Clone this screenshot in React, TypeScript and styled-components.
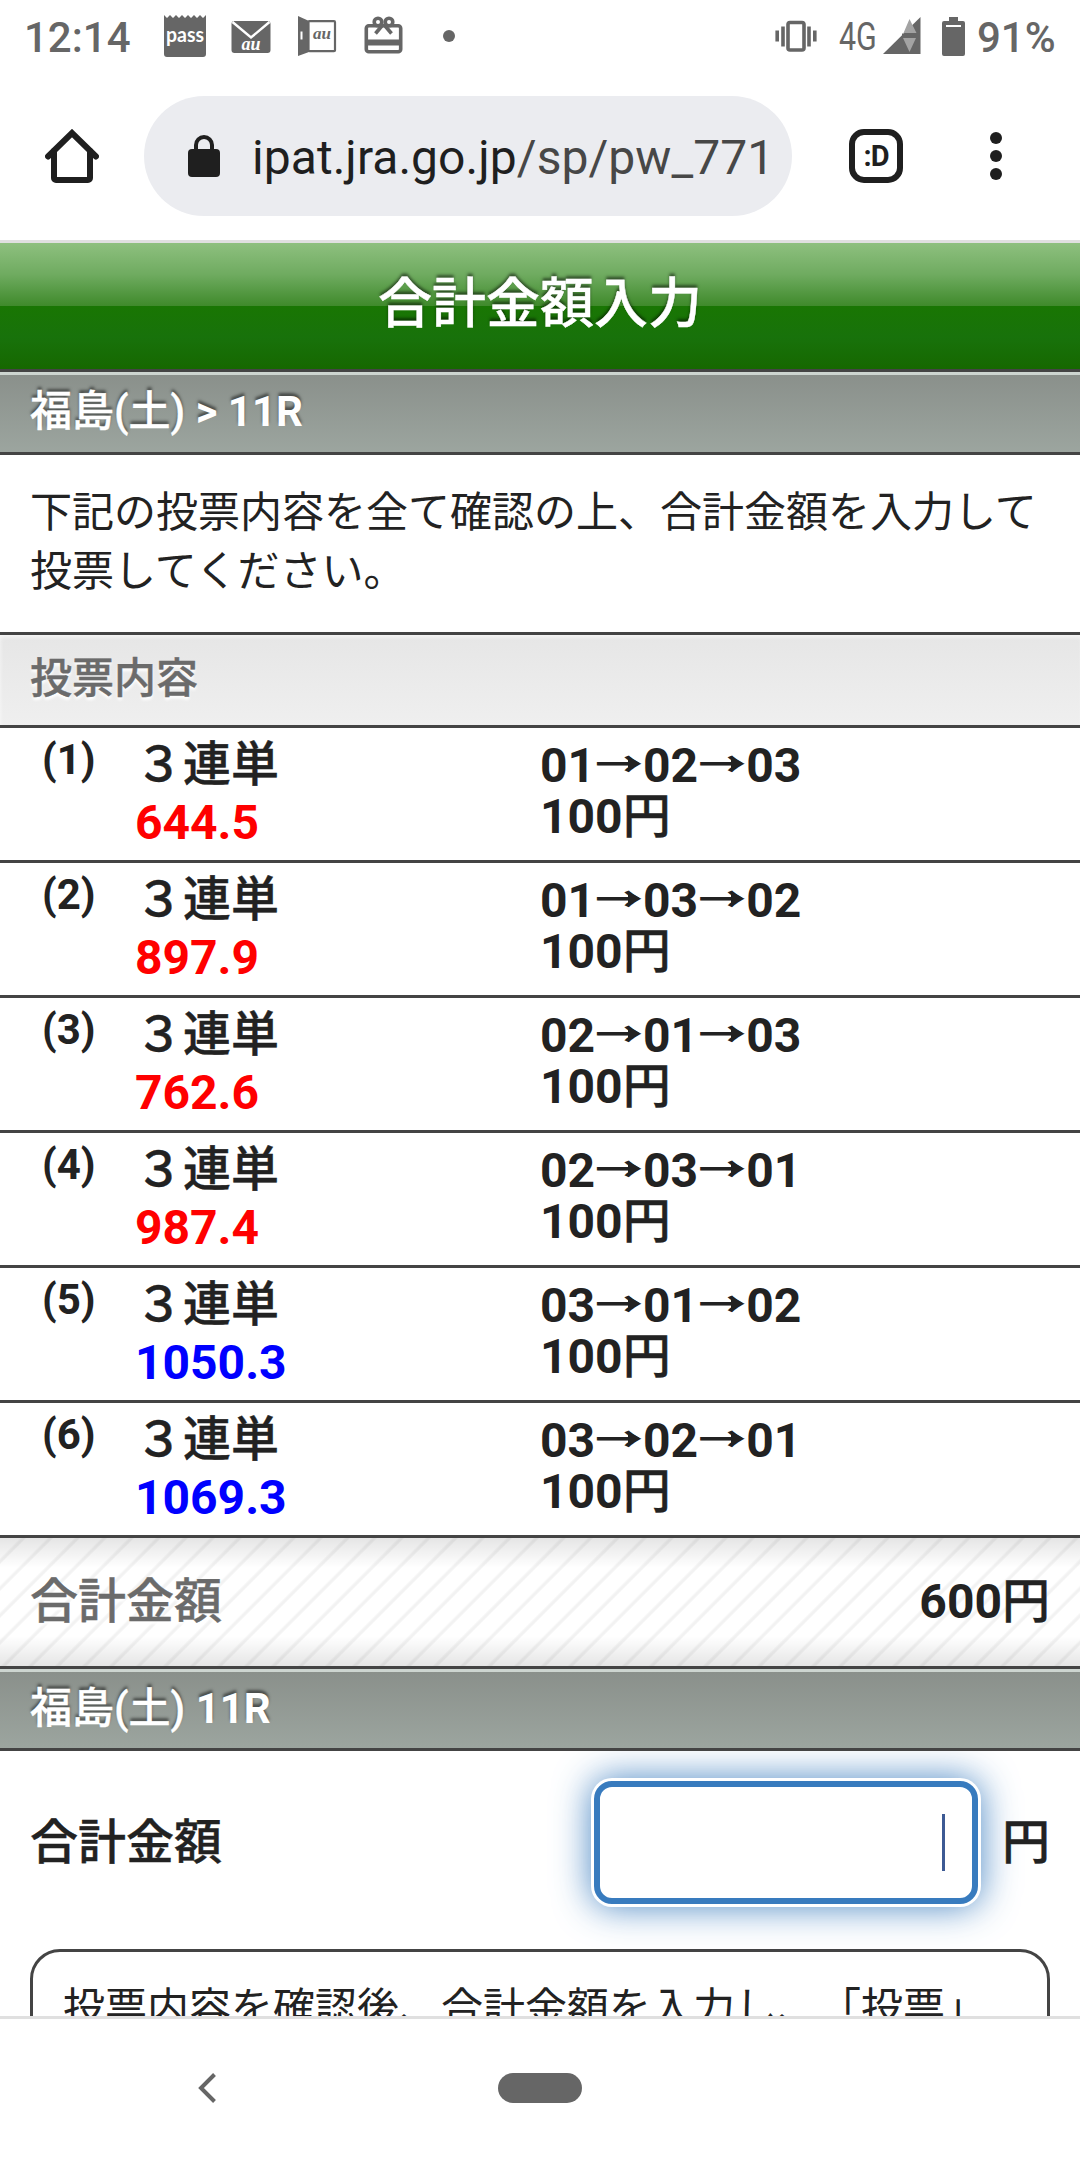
import React from "react";
import styled, { createGlobalStyle, css } from "styled-components";

const JP = `Roboto, "Noto Sans CJK JP", sans-serif`;

const GlobalStyle = createGlobalStyle`
  * { box-sizing: border-box; }
  body {
    margin: 0;
    background: #fff;
    font-family: ${JP};
    color: #222;
    text-spacing-trim: space-all;
  }
`;

const Screen = styled.div`
  width: 1080px;
  height: 2160px;
  display: flex;
  flex-direction: column;
  overflow: hidden;
  background: #fff;
`;

const StatusBar = styled.header`
  display: flex;
  align-items: center;
  height: 72px;
  padding: 0 25px 0 24px;
  color: #666;
  font-size: 42px;
  font-weight: 500;
  line-height: 72px;
`;

const Clock = styled.span`
  width: 140px;
  padding-top: 3px;
`;

const Notifications = styled.div`
  display: flex;
  flex: 1;
  align-items: center;
  gap: 25px;
  svg { display: block; }
`;

const MoreDot = styled.i`
  width: 12px;
  height: 12px;
  margin-left: 14px;
  border-radius: 50%;
  background: #666;
`;

const Network = styled.span`
  width: 44px;
  margin-left: 22px;
  padding-top: 1px;
  font-size: 38px;
  font-weight: 400;
  transform: scaleX(0.8);
  transform-origin: 0 50%;
`;

const SignalSlot = styled.span`
  display: flex;
  width: 59px;
`;

const Battery = styled.span`
  width: 78px;
  margin-left: 12px;
  padding-top: 3px;
`;

const Toolbar = styled.nav`
  display: flex;
  align-items: center;
  height: 168px;
  padding-left: 45px;
  > * { flex: none; }
`;

const AddressPill = styled.div`
  display: flex;
  align-items: center;
  width: 648px;
  height: 120px;
  margin: 0 57px 0 45px;
  padding-left: 44px;
  border-radius: 60px;
  background: #ebecf0;
  color: #1f1f1f;
  font-size: 48px;
  letter-spacing: 0.05px;
  white-space: nowrap;
`;

const Url = styled.span`
  margin-left: 32px;
  padding-top: 3px;
  span { color: #474747; }
`;

const TabCounter = styled.div`
  width: 54px;
  height: 54px;
  margin-right: 87px;
  border: 6px solid #1f1f1f;
  border-radius: 15px;
  color: #1f1f1f;
  font-size: 29px;
  font-weight: 700;
  line-height: 42px;
  text-align: center;
  letter-spacing: -1px;
`;

const Page = styled.main`
  flex: none;
  height: 1776px;
  overflow: hidden;
  border-top: 3px solid #e0e0e0;
`;

const heavyKanji = css`
  font-weight: 500;
  -webkit-text-stroke: 0.4px currentColor;
`;

const Kanji = styled.span`
  ${heavyKanji}
`;

const TitleBar = styled.h1`
  height: 129px;
  margin: 0;
  border-bottom: 3px solid #444;
  background: linear-gradient(#8ec07f 0, #6fab60 25%, #3f8a2b 50%, #197603 50%, #18720b 75%, #166800 100%);
  color: #fff;
  font-size: 54px;
  line-height: 124px;
  text-align: center;
  text-shadow: 0 -3px 3px rgba(0, 0, 0, 0.5);
  ${heavyKanji}
`;

const SectionBar = styled.h2<{ $height: number }>`
  position: relative;
  z-index: 1;
  height: ${(p) => p.$height}px;
  margin: 0;
  padding-left: 30px;
  border-top: 3px solid #cdd5d0;
  border-bottom: 3px solid #444;
  background: linear-gradient(#8a908b, #9ca59f) padding-box;
  color: #fff;
  font-size: 42px;
  font-weight: 700;
  line-height: 73px;
  text-shadow: 0 -3px 3px rgba(0, 0, 0, 0.5);
`;

const Instructions = styled.p`
  height: 177px;
  margin: 0;
  padding: 28px 30px 0;
  font-size: 42px;
  line-height: 59px;
`;

const ListHeading = styled.h3`
  height: 96px;
  margin: 0;
  padding-left: 30px;
  border: solid #444;
  border-width: 3px 0;
  background: linear-gradient(#e6e6e6, #efefef);
  box-shadow: inset 1px 3px 4px -1px rgba(255, 255, 255, 0.7);
  color: #6b6b6b;
  font-size: 42px;
  line-height: 87px;
  text-shadow: 0 3px 3px #fff;
  ${heavyKanji}
`;

const BetRow = styled.div`
  display: grid;
  grid-template-columns: 93px 405px 1fr;
  height: 135px;
  padding-left: 42px;
  border-bottom: 3px solid #444;
  font-weight: 700;
`;

const BetNumber = styled.span`
  padding-top: 7px;
  font-size: 42px;
  line-height: 50px;
`;

const BetCell = styled.div<{ $tight?: boolean }>`
  display: flex;
  flex-direction: column;
  font-size: 48px;
  line-height: ${(p) => (p.$tight ? 51 : 58)}px;
  padding-top: ${(p) => (p.$tight ? 12 : 8)}px;
`;

const Odds = styled.span<{ $high: boolean }>`
  color: ${(p) => (p.$high ? "#00f" : "#f00")};
`;

/* Flattened full-width arrow whose head is filled in by a small triangle. */
const Arrow = styled.span`
  position: relative;
  display: inline-block;
  width: 48px;
  font-family: "Noto Sans CJK JP", sans-serif;
  font-weight: 700;
  line-height: 42px;
  transform: scaleY(0.7);
  transform-origin: 50% 23.7px;

  &::after {
    content: "";
    position: absolute;
    top: 13.200px;
    left: 33px;
    border: solid transparent;
    border-width: 10.5px 0 10.5px 12.5px;
    border-left-color: #222;
  }
`;

const TotalRow = styled.div`
  display: flex;
  justify-content: space-between;
  height: 131px;
  padding: 0 30px;
  border-bottom: 3px solid #444;
  background:
    linear-gradient(rgba(0, 0, 0, 0.1), rgba(0, 0, 0, 0) 30px, rgba(0, 0, 0, 0) 98px, rgba(0, 0, 0, 0.1)),
    repeating-linear-gradient(135deg, #fff 0, #fff 14px, #f2f2f2 16px, #f2f2f2 17.5px, #fff 19.092px);
  font-size: 48px;
  font-weight: 700;
  line-height: 127px;
`;

const TotalLabel = styled.span`
  color: #6b6b6b;
  text-shadow: 0 3px 3px #fff;
  ${heavyKanji}
`;

const AmountRow = styled.label`
  display: flex;
  align-items: center;
  height: 183px;
  padding: 0 30px;
  font-size: 48px;
  line-height: 60px;
`;

const AmountLabel = styled.span`
  flex: 1;
  ${heavyKanji}
`;

const AmountField = styled.div`
  display: flex;
  align-items: center;
  justify-content: flex-end;
  width: 384px;
  height: 123px;
  margin-right: 24px;
  padding-right: 27px;
  border: 6px solid #387bbe;
  border-radius: 18px;
  background: #fff;
  box-shadow: 0 0 0 3px #fff, 0 0 36px 3px rgba(56, 123, 190, 0.9);
`;

const Caret = styled.i`
  width: 3px;
  height: 57px;
  background: #3d5a94;
`;

const NoteBox = styled.div`
  height: 200px;
  margin: 15px 30px 0;
  padding: 27px 30px;
  border: 3px solid #444;
  border-radius: 30px;
  background: #fff;
  font-size: 42px;
  line-height: 59px;
`;

const SystemNav = styled.footer`
  display: grid;
  grid-template-columns: 198px 300px 84px;
  align-items: center;
  height: 144px;
  padding-bottom: 3px;
  border-top: 3px solid #e0e0e0;
  svg { grid-column: 2; display: block; }
`;

const HomePill = styled.i`
  grid-column: 3;
  height: 30px;
  border-radius: 15px;
  background: #666;
`;

const INK = "#666";

function PassIcon() {
  return (
    <svg width="42" height="42" viewBox="0 0 42 42">
      <path fill={INK} d="M0 0l3 3 3-3 3 3 3-3 3 3 3-3 3 3 3-3 3 3 3-3 3 3 3-3 3 3 3-3v39a3 3 0 0 1-3 3H3a3 3 0 0 1-3-3z" />
      <text x="21" y="27" fill="#fff" fontFamily="Lato, sans-serif" fontWeight="700" fontSize="20" textAnchor="middle" textLength="38" lengthAdjust="spacingAndGlyphs">pass</text>
    </svg>
  );
}

function MailIcon() {
  return (
    <svg width="41" height="42" viewBox="0 0 41 42">
      <rect x="0.500" y="6" width="39" height="32" rx="3" fill={INK} />
      <path d="M1.500 7L20 22.500 38.500 7" fill="none" stroke="#fff" strokeWidth="2.400" />
      <text x="20" y="35" fill="#fff" fontFamily="Liberation Serif, serif" fontStyle="italic" fontWeight="700" fontSize="18" textAnchor="middle" textLength="19" lengthAdjust="spacingAndGlyphs">au</text>
    </svg>
  );
}

function DoorIcon() {
  return (
    <svg width="42" height="42" viewBox="0 0 42 42">
      <path fill={INK} d="M1 1l11 5v31L1 41z" />
      <rect x="11.500" y="6.200" width="26.500" height="30" rx="1" fill="none" stroke={INK} strokeWidth="2.200" />
      <path d="M4.500 16.500v8" stroke="#fff" strokeWidth="2" />
      <text x="25" y="24" fill={INK} fontFamily="Liberation Serif, serif" fontStyle="italic" fontWeight="700" fontSize="17" textAnchor="middle" textLength="18" lengthAdjust="spacingAndGlyphs">au</text>
    </svg>
  );
}

function GiftIcon() {
  return (
    <svg width="40" height="42" viewBox="0 0 40 42" fill="none" stroke={INK} strokeWidth="3.600">
      <rect x="2.300" y="10.800" width="34.400" height="26" rx="2.500" />
      <path d="M2.500 27.500h34" strokeWidth="6" />
      <circle cx="14" cy="7" r="3.800" />
      <circle cx="25" cy="7" r="3.800" />
      <path d="M19.500 9l-8 9.500M19.500 9l8 9.500" />
    </svg>
  );
}

function VibrateIcon() {
  return (
    <svg width="42" height="42" viewBox="0 0 42 42" fill="none" stroke={INK}>
      <rect x="13" y="7.500" width="16" height="27.500" rx="2" strokeWidth="3.600" />
      <path d="M8 11.500v20M34 11.500v20M2.200 15.500v11M39.800 15.500v11" strokeWidth="3.600" />
    </svg>
  );
}

function SignalIcon() {
  return (
    <svg width="38" height="38" viewBox="0 0 38 38">
      <path fill={INK} d="M37.500 0v37H0z" />
      <path fill="#a3a3a3" d="M26.500 2l7 14h-13zM20 21h13l-6.500 14z" />
      <path stroke={INK} strokeWidth="3" d="M19 18h16" />
    </svg>
  );
}

function BatteryIcon() {
  return (
    <svg width="23" height="39" viewBox="0 0 23 39">
      <path fill={INK} d="M7 0h9v4h5a2 2 0 0 1 2 2v31a2 2 0 0 1-2 2H2a2 2 0 0 1-2-2V6a2 2 0 0 1 2-2h5z" />
      <path stroke="#fff" strokeWidth="2" d="M4 9h15" />
    </svg>
  );
}

function HomeIcon() {
  return (
    <svg width="54" height="54" viewBox="0 0 54 54" fill="none" stroke="#1f1f1f" strokeWidth="6" strokeLinecap="round">
      <path d="M3 27.500L27 4l24 23.500" strokeLinejoin="miter" />
      <path d="M9 22v27a2 2 0 0 0 2 2h32a2 2 0 0 0 2-2V22" />
    </svg>
  );
}

function LockIcon() {
  return (
    <svg width="32" height="42" viewBox="0 0 32 42">
      <rect y="14" width="32" height="28" rx="4" fill="#1f1f1f" />
      <path d="M8 16v-6a8 8 0 0 1 16 0v6" fill="none" stroke="#1f1f1f" strokeWidth="4" />
    </svg>
  );
}

function MenuIcon() {
  return (
    <svg width="12" height="48" viewBox="0 0 12 48" fill="#1f1f1f">
      <circle cx="6" cy="6" r="6" />
      <circle cx="6" cy="24" r="6" />
      <circle cx="6" cy="42" r="6" />
    </svg>
  );
}

const bets = [
  { order: ["01", "02", "03"], odds: 644.5 },
  { order: ["01", "03", "02"], odds: 897.9 },
  { order: ["02", "01", "03"], odds: 762.6 },
  { order: ["02", "03", "01"], odds: 987.4 },
  { order: ["03", "01", "02"], odds: 1050.3 },
  { order: ["03", "02", "01"], odds: 1069.3 },
];

export default function App() {
  return (
    <Screen>
      <GlobalStyle />
      <StatusBar>
        <Clock>12:14</Clock>
        <Notifications>
          <PassIcon />
          <MailIcon />
          <DoorIcon />
          <GiftIcon />
          <MoreDot />
        </Notifications>
        <VibrateIcon />
        <Network>4G</Network>
        <SignalSlot>
          <SignalIcon />
        </SignalSlot>
        <BatteryIcon />
        <Battery>91%</Battery>
      </StatusBar>
      <Toolbar>
        <HomeIcon />
        <AddressPill>
          <LockIcon />
          <Url>
            ipat.jra.go.jp<span>/sp/pw_771</span>
          </Url>
        </AddressPill>
        <TabCounter>:D</TabCounter>
        <MenuIcon />
      </Toolbar>
      <Page>
        <TitleBar>合計金額入力</TitleBar>
        <SectionBar $height={83}>
          <Kanji>福島(土)</Kanji> &gt; 11R
        </SectionBar>
        <Instructions>下記の投票内容を全て確認の上、合計金額を入力して投票してください。</Instructions>
        <ListHeading>投票内容</ListHeading>
        {bets.map((bet, i) => (
          <BetRow key={i}>
            <BetNumber>({i + 1})</BetNumber>
            <BetCell>
              <Kanji>３連単</Kanji>
              <Odds $high={bet.odds >= 1000}>{bet.odds.toFixed(1)}</Odds>
            </BetCell>
            <BetCell $tight>
              <span>
                {bet.order.map((horse, n) => (
                  <React.Fragment key={horse}>
                    {n > 0 && <Arrow>→</Arrow>}
                    {horse}
                  </React.Fragment>
                ))}
              </span>
              <span>
                100<Kanji>円</Kanji>
              </span>
            </BetCell>
          </BetRow>
        ))}
        <TotalRow>
          <TotalLabel>合計金額</TotalLabel>
          <span>
            600<Kanji>円</Kanji>
          </span>
        </TotalRow>
        <SectionBar $height={82}>
          <Kanji>福島(土)</Kanji> 11R
        </SectionBar>
        <AmountRow>
          <AmountLabel>合計金額</AmountLabel>
          <AmountField>
            <Caret />
          </AmountField>
          <Kanji>円</Kanji>
        </AmountRow>
        <NoteBox>投票内容を確認後、合計金額を入力し、「投票」</NoteBox>
      </Page>
      <SystemNav>
        <svg width="20" height="30" viewBox="0 0 20 30">
          <path d="M16.500 1.500L3 15l13.500 13.500" fill="none" stroke="#666" strokeWidth="4" />
        </svg>
        <HomePill />
      </SystemNav>
    </Screen>
  );
}
